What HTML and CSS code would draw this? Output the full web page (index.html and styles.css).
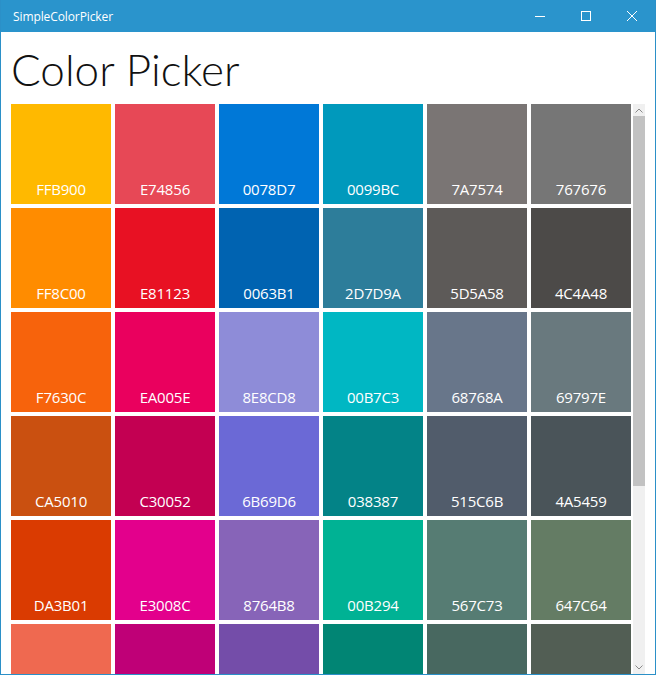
FILE: index.html
```html
<!DOCTYPE html>
<html>
<head>
<meta charset="utf-8">
<link rel="stylesheet" href="styles.css">
</head>
<body>
<div class="window">
  <div class="titlebar">
    <span class="title">SimpleColorPicker</span>
    <div class="controls">
      <span class="ctl"><svg width="10" height="10" viewBox="0 0 10 10"><path d="M0 5.5H10" stroke="#fff" stroke-width="1"/></svg></span>
      <span class="ctl"><svg width="10" height="10" viewBox="0 0 10 10"><rect x="0.5" y="0.5" width="9" height="9" fill="none" stroke="#fff" stroke-width="1"/></svg></span>
      <span class="ctl"><svg width="10" height="10" viewBox="0 0 10 10"><path d="M0 0L10 10M10 0L0 10" stroke="#fff" stroke-width="1"/></svg></span>
    </div>
  </div>
  <div class="content">
    <h1 class="heading">Color Picker</h1>
    <div class="scroller">
      <div class="grid">
        <div class="tile" style="background:#FFB900"><span>FFB900</span></div>
        <div class="tile" style="background:#E74856"><span>E74856</span></div>
        <div class="tile" style="background:#0078D7"><span>0078D7</span></div>
        <div class="tile" style="background:#0099BC"><span>0099BC</span></div>
        <div class="tile" style="background:#7A7574"><span>7A7574</span></div>
        <div class="tile" style="background:#767676"><span>767676</span></div>

        <div class="tile" style="background:#FF8C00"><span>FF8C00</span></div>
        <div class="tile" style="background:#E81123"><span>E81123</span></div>
        <div class="tile" style="background:#0063B1"><span>0063B1</span></div>
        <div class="tile" style="background:#2D7D9A"><span>2D7D9A</span></div>
        <div class="tile" style="background:#5D5A58"><span>5D5A58</span></div>
        <div class="tile" style="background:#4C4A48"><span>4C4A48</span></div>

        <div class="tile" style="background:#F7630C"><span>F7630C</span></div>
        <div class="tile" style="background:#EA005E"><span>EA005E</span></div>
        <div class="tile" style="background:#8E8CD8"><span>8E8CD8</span></div>
        <div class="tile" style="background:#00B7C3"><span>00B7C3</span></div>
        <div class="tile" style="background:#68768A"><span>68768A</span></div>
        <div class="tile" style="background:#69797E"><span>69797E</span></div>

        <div class="tile" style="background:#CA5010"><span>CA5010</span></div>
        <div class="tile" style="background:#C30052"><span>C30052</span></div>
        <div class="tile" style="background:#6B69D6"><span>6B69D6</span></div>
        <div class="tile" style="background:#038387"><span>038387</span></div>
        <div class="tile" style="background:#515C6B"><span>515C6B</span></div>
        <div class="tile" style="background:#4A5459"><span>4A5459</span></div>

        <div class="tile" style="background:#DA3B01"><span>DA3B01</span></div>
        <div class="tile" style="background:#E3008C"><span>E3008C</span></div>
        <div class="tile" style="background:#8764B8"><span>8764B8</span></div>
        <div class="tile" style="background:#00B294"><span>00B294</span></div>
        <div class="tile" style="background:#567C73"><span>567C73</span></div>
        <div class="tile" style="background:#647C64"><span>647C64</span></div>

        <div class="tile" style="background:#EF6950"></div>
        <div class="tile" style="background:#BF0077"></div>
        <div class="tile" style="background:#744DA9"></div>
        <div class="tile" style="background:#018574"></div>
        <div class="tile" style="background:#486860"></div>
        <div class="tile" style="background:#525E54"></div>
      </div>
      <div class="scrollbar">
        <div class="arrow up"><svg width="8" height="5" viewBox="0 0 8 5"><path d="M0.5 4.5L4 1L7.5 4.5" fill="none" stroke="#8a8a8a" stroke-width="1"/></svg></div>
        <div class="thumb"></div>
        <div class="track"></div>
        <div class="arrow down"><svg width="8" height="5" viewBox="0 0 8 5"><path d="M0.5 0.5L4 4L7.5 0.5" fill="none" stroke="#8a8a8a" stroke-width="1"/></svg></div>
      </div>
    </div>
  </div>
</div>
</body>
</html>
```
FILE: styles.css
```css
html, body {
  margin: 0;
  padding: 0;
  background: #fff;
}
.window {
  width: 656px;
  height: 675px;
  box-sizing: border-box;
  border: 1px solid #2b90c8;
  border-top: none;
  display: flex;
  flex-direction: column;
  overflow: hidden;
  font-family: "Open Sans", "Noto Sans", sans-serif;
}
.titlebar {
  height: 32px;
  flex: none;
  background: #2a94cc;
  display: flex;
  align-items: center;
  justify-content: space-between;
  color: #fff;
}
.title {
  font-size: 12px;
  padding-left: 12px;
  letter-spacing: -0.1px;
}
.controls {
  display: flex;
  height: 32px;
}
.ctl {
  width: 46px;
  height: 32px;
  display: flex;
  align-items: center;
  justify-content: center;
}
.content {
  flex: 1;
  min-height: 0;
  display: flex;
  flex-direction: column;
  padding-left: 10px;
}
.heading {
  margin: 0;
  height: 72px;
  box-sizing: border-box;
  padding-top: 11px;
  font-family: "Lato", "Open Sans", sans-serif;
  font-weight: 300;
  font-size: 44px;
  line-height: 52px;
  color: #111;
  flex: none;
}
.scroller {
  flex: 1;
  min-height: 0;
  display: flex;
  gap: 2px;
}
.grid {
  display: grid;
  grid-template-columns: repeat(6, 100px);
  grid-auto-rows: 100px;
  gap: 4px;
  overflow: hidden;
  align-content: start;
}
.tile {
  display: flex;
  align-items: flex-end;
  justify-content: center;
  color: #fff;
  font-size: 15px;
  line-height: 20px;
  padding-bottom: 5px;
  box-sizing: border-box;
  letter-spacing: -0.2px;
}
.scrollbar {
  width: 12px;
  background: #f0f0f0;
  display: flex;
  flex-direction: column;
}
.arrow {
  height: 12px;
  display: flex;
  align-items: center;
  justify-content: center;
  flex: none;
}
.thumb {
  height: 370px;
  background: #c2c2c2;
  flex: none;
}
.track {
  flex: 1;
}
.arrow.down {
  height: 14px;
}
```
